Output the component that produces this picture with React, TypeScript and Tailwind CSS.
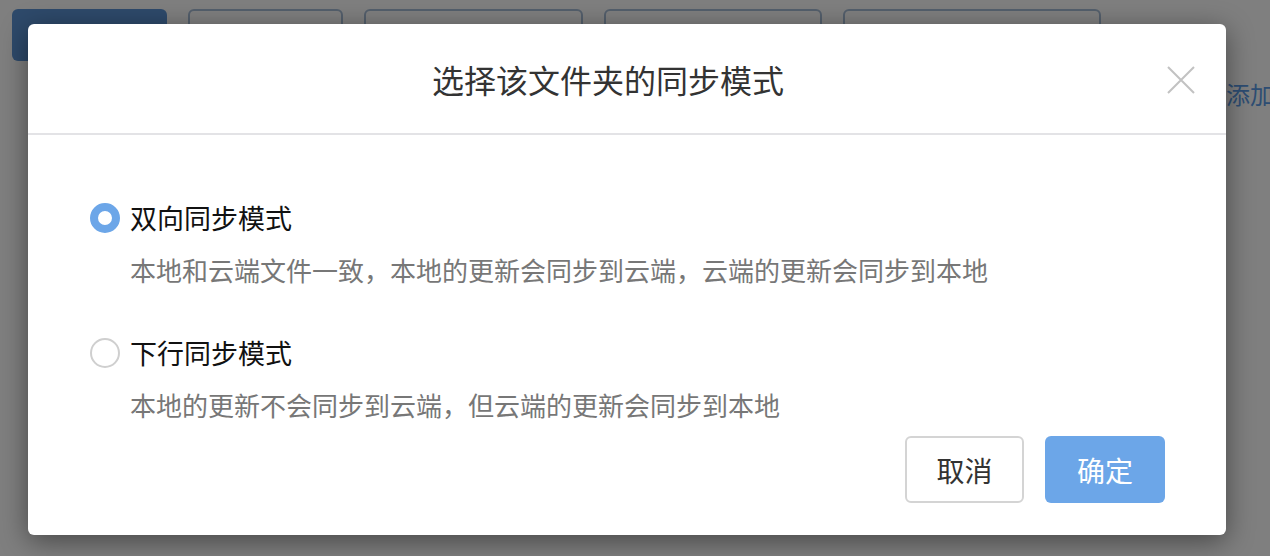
import React, { useState } from "react";

const font = "font-['Noto_Sans_CJK_SC','Noto_Sans',sans-serif]";

type Mode = "two-way" | "down";

const options: { key: Mode; label: string; desc: string }[] = [
  {
    key: "two-way",
    label: "双向同步模式",
    desc: "本地和云端文件一致，本地的更新会同步到云端，云端的更新会同步到本地",
  },
  {
    key: "down",
    label: "下行同步模式",
    desc: "本地的更新不会同步到云端，但云端的更新会同步到本地",
  },
];

const Radio = ({ checked }: { checked: boolean }) =>
  checked ? (
    <span className="box-border h-[30px] w-[30px] shrink-0 rounded-full border-[8px] border-[#6ca6e8] bg-white" />
  ) : (
    <span className="box-border h-[30px] w-[30px] shrink-0 rounded-full border-2 border-[#cfcfcf] bg-white" />
  );

export default function App() {
  const [mode, setMode] = useState<Mode>("two-way");

  return (
    <div className={`relative h-[556px] w-full overflow-hidden bg-white ${font}`}>
      {/* page behind the dialog */}
      <div className="flex items-start gap-[21px] pl-[12px] pt-[9px]">
        <div className="h-[52px] w-[155px] rounded-[6px] bg-[#5c95d6]" />
        <div className="h-[52px] w-[155px] rounded-[6px] border-2 border-[#a9bfd8]" />
        <div className="h-[52px] w-[219px] rounded-[6px] border-2 border-[#a9bfd8]" />
        <div className="h-[52px] w-[218px] rounded-[6px] border-2 border-[#a9bfd8]" />
        <div className="h-[52px] w-[258px] rounded-[6px] border-2 border-[#a9bfd8]" />
      </div>
      <div className="mt-[15px] flex justify-end">
        <span className="w-[44px] overflow-hidden whitespace-nowrap text-[24px] leading-[36px] text-[#5b9be6]">
          添加
        </span>
      </div>

      {/* mask */}
      <div className="absolute inset-0 bg-black/50 pl-[28px] pt-[24px]">
        <div className="w-[1198px] rounded-[6px] bg-white shadow-[0_6px_28px_rgba(0,0,0,0.45)]">
          <div className="relative flex h-[111px] items-center justify-center border-b-2 border-[#e3e3e6] pr-[38px]">
            <span className="text-[32px] text-[#333]">选择该文件夹的同步模式</span>
            <button className="absolute right-[31px] top-[42px] text-[#c2c2c2]">
              <svg width="28" height="28" viewBox="0 0 28 28">
                <path d="M1 1 L27 27 M27 1 L1 27" stroke="currentColor" strokeWidth="2" fill="none" />
              </svg>
            </button>
          </div>

          <div className="px-[61px] pb-[32px] pt-[63px]">
            {options.map((o, i) => (
              <div key={o.key} className={i > 0 ? "mt-[45px]" : ""}>
                <label
                  className="flex h-[40px] cursor-pointer items-center gap-[10px] pl-[1px]"
                  onClick={() => setMode(o.key)}
                >
                  <Radio checked={mode === o.key} />
                  <span className="text-[27px] leading-[40px] text-[#111]">{o.label}</span>
                </label>
                <div className="mt-[14px] pl-[41px] text-[26px] leading-[36px] text-[#777]">
                  {o.desc}
                </div>
              </div>
            ))}

            <div className="mt-[13px] flex justify-end gap-[21px]">
              <button className="h-[67px] w-[119px] rounded-[6px] border-2 border-[#d4d4d4] bg-white text-[28px] text-[#333]">
                取消
              </button>
              <button className="h-[67px] w-[120px] rounded-[6px] bg-[#6ca6e8] text-[28px] text-white">
                确定
              </button>
            </div>
          </div>
        </div>
      </div>
    </div>
  );
}
